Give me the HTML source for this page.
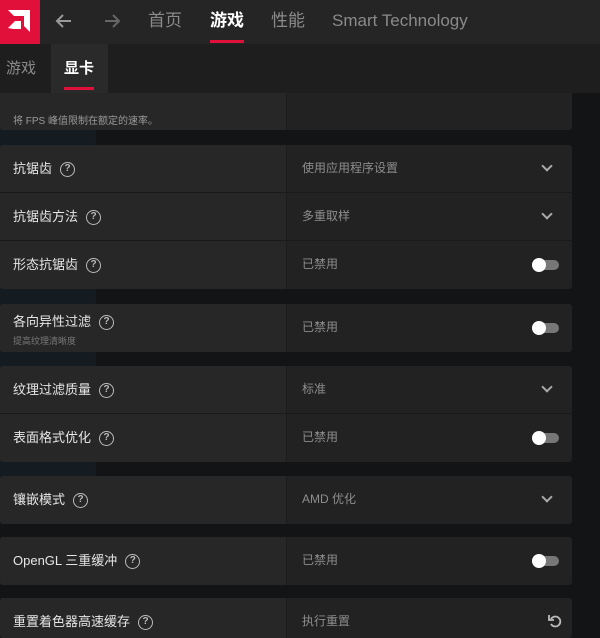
<!DOCTYPE html>
<html><head><meta charset="utf-8"><style>
*{margin:0;padding:0;box-sizing:border-box}
html,body{width:600px;height:638px;overflow:hidden}
body{background:#131415;font-family:"Liberation Sans","Noto Sans CJK SC",sans-serif;position:relative}
.hdr{position:absolute;left:0;top:0;width:600px;height:44px;background:#252525}
.logo{position:absolute;left:0;top:0;width:40px;height:44px;background:#e0103a}
.nav{position:absolute;top:0;line-height:42px;font-size:17px;color:#8a8a8a}
.sub{position:absolute;left:0;top:44px;width:600px;height:49px;background:#1e1e1e}
.card{position:absolute;left:0;width:572px;background:#222;border-radius:3px;overflow:hidden}
.row{position:relative;height:48px;border-bottom:1px solid #1a1a1a}
.row:last-child{border-bottom:none}
.l{position:absolute;left:0;top:0;width:287px;height:100%;background:#272727;border-right:1px solid #1c1c1c}
.lt{position:absolute;left:13px;top:0;height:48px;display:flex;align-items:center;font-size:13px;line-height:16px;color:#e6e6e6;white-space:nowrap}
.q{display:inline-block;width:15px;height:15px;border:1.5px solid #bbb;border-radius:50%;font-size:10px;line-height:12px;text-align:center;color:#bbb;margin-left:8px;font-weight:bold;font-family:"Liberation Sans",sans-serif}
.rt{position:absolute;left:302px;top:0;line-height:47px;font-size:12px;color:#8d8d8d}
.chev{position:absolute;left:543px;top:17px;width:8px;height:8px;border-right:2px solid #aaa;border-bottom:2px solid #aaa;transform:rotate(45deg)}
.tog{position:absolute;left:532px;top:19px;width:27px;height:10px;border-radius:5px;background:#777}
.tog:before{content:"";position:absolute;left:0;top:-2px;width:14px;height:14px;border-radius:50%;background:#fff}
</style></head><body>
<div style="position:absolute;left:0;top:93px;width:96px;height:400px;background:#152129;opacity:.6"></div>
<div class="hdr">
 <div class="logo"><svg width="40" height="44"><path d="M8 10h22v22l-6-6V16h-10z M8 28l7-7h6v8h-8z" fill="#fff"/></svg></div>
 <svg style="position:absolute;left:54px;top:12px" width="20" height="18"><path d="M17 9H3M9 3L3 9l6 6" stroke="#999" stroke-width="2" fill="none"/></svg>
 <svg style="position:absolute;left:102px;top:12px" width="20" height="18"><path d="M3 9h14M11 3l6 6-6 6" stroke="#666" stroke-width="2" fill="none"/></svg>
 <div class="nav" style="left:148px">首页</div>
 <div class="nav" style="left:210px;color:#fff;font-weight:bold">游戏</div>
 <div style="position:absolute;left:210px;top:40px;width:34px;height:3px;background:#e0103a"></div>
 <div class="nav" style="left:271px">性能</div>
 <div class="nav" style="left:332px">Smart Technology</div>
</div>
<div class="sub">
 <div style="position:absolute;left:6px;top:0;line-height:50px;font-size:15px;color:#8a8a8a">游戏</div>
 <div style="position:absolute;left:51px;top:0;width:57px;height:49px;background:#2a2a2a"></div>
 <div style="position:absolute;left:64px;top:0;line-height:50px;font-size:15px;color:#fff;font-weight:bold">显卡</div>
 <div style="position:absolute;left:64px;top:43px;width:30px;height:3px;background:#e0103a"></div>
</div>
<div class="card" style="top:93px;height:37px;border-radius:0 0 3px 3px"><div class="row" style="height:37px"><div class="l"></div><div style="position:absolute;left:13px;top:19px;font-size:10px;color:#999">将 FPS 峰值限制在额定的速率。</div></div></div>
<div class="card" style="top:145px">
 <div class="row"><div class="l"></div><div class="lt">抗锯齿<span class="q">?</span></div><div class="rt">使用应用程序设置</div><div class="chev"></div></div>
 <div class="row"><div class="l"></div><div class="lt">抗锯齿方法<span class="q">?</span></div><div class="rt">多重取样</div><div class="chev"></div></div>
 <div class="row"><div class="l"></div><div class="lt">形态抗锯齿<span class="q">?</span></div><div class="rt">已禁用</div><div class="tog"></div></div>
</div>
<div class="card" style="top:304px">
 <div class="row"><div class="l"></div><div class="lt" style="height:36px">各向异性过滤<span class="q">?</span></div><div style="position:absolute;left:13px;top:30px;font-size:9px;color:#777">提高纹理清晰度</div><div class="rt">已禁用</div><div class="tog"></div></div>
</div>
<div class="card" style="top:366px">
 <div class="row"><div class="l"></div><div class="lt">纹理过滤质量<span class="q">?</span></div><div class="rt">标准</div><div class="chev"></div></div>
 <div class="row"><div class="l"></div><div class="lt">表面格式优化<span class="q">?</span></div><div class="rt">已禁用</div><div class="tog"></div></div>
</div>
<div class="card" style="top:476px">
 <div class="row"><div class="l"></div><div class="lt">镶嵌模式<span class="q">?</span></div><div class="rt">AMD 优化</div><div class="chev"></div></div>
</div>
<div class="card" style="top:537px">
 <div class="row"><div class="l"></div><div class="lt">OpenGL 三重缓冲<span class="q">?</span></div><div class="rt">已禁用</div><div class="tog"></div></div>
</div>
<div class="card" style="top:598px;height:40px">
 <div class="row"><div class="l"></div><div class="lt">重置着色器高速缓存<span class="q">?</span></div><div class="rt">执行重置</div>
 <svg style="position:absolute;left:548px;top:15px" width="14" height="16"><path d="M3 6a5 5 0 1 1 0 5" stroke="#bbb" stroke-width="1.8" fill="none"/><path d="M1 2v5h5" stroke="#bbb" stroke-width="1.8" fill="none"/></svg></div>
</div>
</body></html>
